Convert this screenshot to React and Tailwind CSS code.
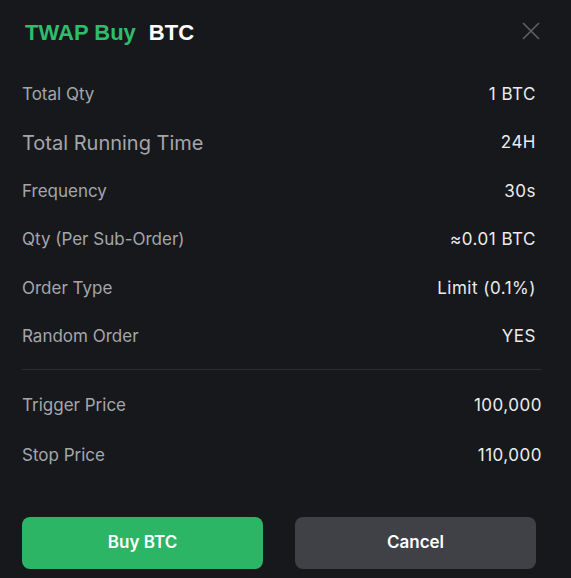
export default function App() {
  const rows = [
    ["Total Qty", "1 BTC", "text-[17px]"],
    ["Total Running Time", "24H", "text-[20px]"],
    ["Frequency", "30s", "text-[17px]"],
    ["Qty (Per Sub-Order)", "≈0.01 BTC", "text-[17px]"],
    ["Order Type", "Limit (0.1%)", "text-[17px]"],
    ["Random Order", "YES", "text-[17px]"],
  ];
  const prices = [
    ["Trigger Price", "100,000"],
    ["Stop Price", "110,000"],
  ];
  return (
    <div className="w-[571px] h-[578px] bg-[#17181c] overflow-hidden" style={{ fontFamily: "Inter, 'Noto Sans', sans-serif" }}>
      <div className="h-[64px] flex items-center pl-[25px] pr-[31px] justify-between">
        <div className="flex items-center gap-[13px] text-[22px] font-bold" style={{ fontFamily: "'Liberation Sans', Arial, sans-serif" }}>
          <span className="text-[#2ebd6b]">TWAP Buy</span>
          <span className="text-white">BTC</span>
        </div>
        <svg width="18" height="18" viewBox="0 0 18 18" className="mt-[-2px]">
          <path d="M1 1L17 17M17 1L1 17" stroke="#5f6167" strokeWidth="1.6" />
        </svg>
      </div>
      <div className="mt-[6px] pl-[22px] pr-[35px]">
        {rows.map(([l, v, s]) => (
          <div key={l} className="h-[48.5px] flex items-center justify-between">
            <span className={`${s} text-[#a4a6ab]`}>{l}</span>
            <span className="text-[17px] tracking-[0.5px] text-[#eaecef]">{v}</span>
          </div>
        ))}
      </div>
      <div className="mt-[8px] mx-[22px] w-[520px] h-px bg-[#2b2d31]" />
      <div className="mt-[11px] pl-[22px] pr-[29px]">
        {prices.map(([l, v]) => (
          <div key={l} className="h-[50px] flex items-center justify-between">
            <span className="text-[17px] text-[#a4a6ab]">{l}</span>
            <span className="text-[17px] tracking-[0.5px] text-[#eaecef]">{v}</span>
          </div>
        ))}
      </div>
      <div className="mt-[36px] pl-[22px] pr-[35px] flex gap-[32px]">
        <button className="w-[241px] h-[52px] rounded-[8px] bg-[#2cb565] text-white text-[17px] font-semibold">Buy BTC</button>
        <button className="w-[241px] h-[52px] rounded-[8px] bg-[#3f4146] text-white text-[17px] font-semibold">Cancel</button>
      </div>
    </div>
  );
}
